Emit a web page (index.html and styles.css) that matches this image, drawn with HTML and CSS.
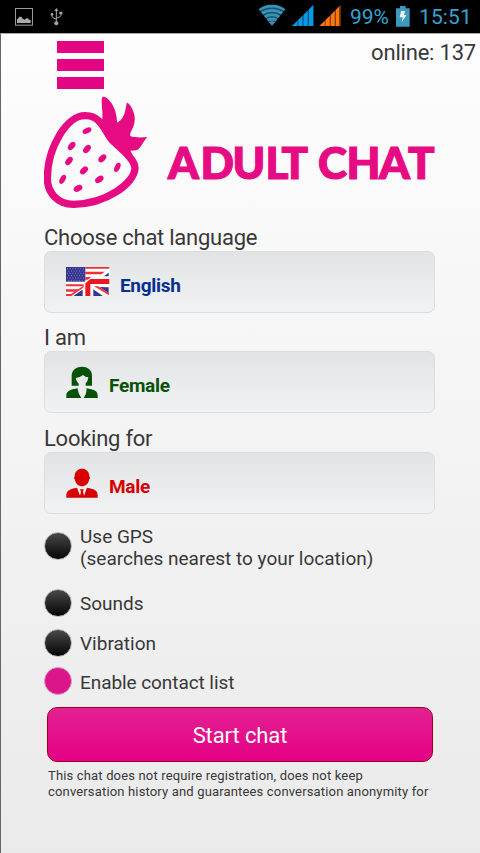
FILE: index.html
```html
<!DOCTYPE html>
<html lang="en">
<head>
<meta charset="utf-8">
<title>Adult Chat</title>
<link rel="stylesheet" href="styles.css">
</head>
<body>
<header class="status">
  <svg class="status-left" width="80" height="33" viewBox="0 0 240 99">
    <rect x="46.500" y="25.500" width="51" height="50" fill="none" stroke="#999" stroke-width="3"/>
    <path d="M51 69V58l4-3 3-5h6l4 6 6 3 5-4h5l3 4 5 1v9z" fill="#aaa"/>
    <g fill="none" stroke="#a6a6a6" stroke-width="3"><path d="M169 70V30M156 43v6q1 6 13 8M183 39v7q-1 6-14 8"/></g>
    <g fill="#a6a6a6"><circle cx="169" cy="70" r="6"/><circle cx="156" cy="43" r="4"/><path d="M178 35h9v8h-9zM169 24l6 9h-12z"/></g>
  </svg>
  <svg class="status-signal" width="90" height="33" viewBox="40 0 270 99">
    <clipPath id="fan"><path d="M97 77L57 28Q97-2 137 28z"/></clipPath>
    <path d="M97 77L57 28Q97 4 137 28z" fill="#1d5068"/>
    <g clip-path="url(#fan)" fill="none" stroke="#3793ba" stroke-width="8.500">
      <path d="M55 30Q97 6 139 30M63 42Q97 20 131 42M72 53Q97 35 122 53M80 63Q97 51 114 63"/><path d="M86 68Q97 60 108 68L97 80z" fill="#3793ba" stroke="none"/>
    </g>
    <path d="M157 78L221 15V78z" fill="#06537c"/>
    <path d="M157 78l16-15v15zM176 78V60l12-12v30zM192 78V44l12-12v46zM208 78V28l13-13v63z" fill="#0899e5"/>
    <path d="M239 78L303 15V78z" fill="#8b3d08"/>
    <path d="M239 78l16-15v15zM258 78V60l12-12v30zM274 78V44l11-11v45zM289 78V29l9-9v58z" fill="#ff7510"/>
  </svg>
  <span class="percent">99%</span>
  <svg class="battery" width="14" height="21" viewBox="0 0 42 63">
    <path d="M0 7h12V0h17v7h12v55H0z" fill="#3999bf"/>
    <path d="M15 15h12l-3 12h8L17 49l3-15h-9z" fill="#eee"/>
  </svg>
  <span class="clock">15:51</span>
</header>
<main class="page">
  <div class="topbar">
    <div class="menu"><i></i><i></i><i></i></div>
    <span class="online">online: 137</span>
  </div>
  <div class="brand">
    <svg width="104" height="113" viewBox="42 18 312 339">
      <path d="M168 77C213 77 225 125 247 151C269 174 315 205 315 235C313 279 230 342 131 343C81 343 52 306 52 265C52 174 111 73 168 77z" fill="none" stroke="#e70b83" stroke-width="22"/>
      <path d="M216 92C221 67 211 34 217 22C225 13 262 45 261 98C288 85 285 53 291 38C301 39 317 72 314 91C313 113 300 124 300 138C319 144 338 142 352 141C339 153 332 179 318 181L301 182L307 193L270 177L230 143L210 105z" fill="#e70b83"/>
      <g fill="#e70b83">
        <ellipse cx="171" cy="122" rx="14" ry="8" transform="rotate(-25 171 122)"/>
        <ellipse cx="125" cy="168" rx="14" ry="9" transform="rotate(-52 125 168)"/>
        <ellipse cx="171" cy="177" rx="14" ry="9" transform="rotate(-48 171 177)"/>
        <ellipse cx="117" cy="213" rx="14" ry="9" transform="rotate(-52 117 213)"/>
        <ellipse cx="217" cy="205" rx="14" ry="9" transform="rotate(-45 217 205)"/>
        <ellipse cx="162" cy="241" rx="14" ry="9" transform="rotate(-43 162 241)"/>
        <ellipse cx="262" cy="232" rx="15" ry="8" transform="rotate(-65 262 232)"/>
        <ellipse cx="98" cy="268" rx="15" ry="8" transform="rotate(-62 98 268)"/>
        <ellipse cx="208" cy="268" rx="14" ry="9" transform="rotate(-35 208 268)"/>
        <ellipse cx="144" cy="295" rx="14" ry="9" transform="rotate(-28 144 295)"/>
      </g>
    </svg>
    <svg class="wordmark" width="280" height="64" viewBox="0 0 280 64">
      <text x="4 36.500 68.500 101.500 117.500 141 154 182.500 215 244" y="43.500">ADULT CHAT</text>
    </svg>
  </div>
  <section class="field">
    <h2>Choose chat language</h2>
    <div class="select blue">
      <svg width="44" height="30" viewBox="0 0 132 90">
        <rect width="130" height="87" fill="#fff"/>
        <path d="M58 0h72v5H58zM58 14h60l-12 8H58zM58 30h38l-12 8H58zM0 52h58v6H0zM0 67h45l-9 7H0zM0 81h24l-9 6H0z" fill="#ef3038"/>
        <rect width="58" height="44" fill="#35358f"/>
        <path d="M3 5h53M7 12h49M3 19h53M7 26h49M3 33h53M7 40h49" stroke="#8589c3" stroke-width="3" stroke-dasharray="3 5"/>
        <path d="M128 8v20H99zM128 61v18l-27-19zM82 65l34 22H82zM50 62v25H12z" fill="#35358f"/>
        <path d="M130 4L76 45h14l40-29zM80 56l49 31h-18L76 63zM54 56L8 87h14l36-25z" fill="#fff"/>
        <path d="M55 55L6 87h10l42-29zM84 58l45 27v-7L96 58z" fill="#ef3038"/>
        <path d="M53 87V50l22-20h55v27H80v30z" fill="#fff"/>
        <path d="M58 87V49l15-13h57v15H73v36z" fill="#ed1722"/>
      </svg>
      <span>English</span>
    </div>
  </section>
  <section class="field">
    <h2>I am</h2>
    <div class="select green">
      <svg width="32" height="32" viewBox="109 122 96 96">
        <path d="M126 181V151C126 116 187 114 187 151V181H168V174Q175 168 176 156Q167 156 160 149Q151 157 138 158Q140 170 147 175V181zM110 218V211C110 196 125 192 144 189Q144 202 155 218zM162 218Q173 202 170 189C191 193 204 195 204 211V218z" fill="currentColor"/>
      </svg>
      <span>Female</span>
    </div>
  </section>
  <section class="field">
    <h2>Looking for</h2>
    <div class="select red">
      <svg width="32" height="30" viewBox="109 428 96 90">
        <path d="M135 454C134 422 180 422 179 454Q184 455 178 464C174 488 141 490 136 464Q131 456 135 454zM110 517V509C110 494 125 490 142 487L151 511L154 499L151 492H162L160 499L163 511L172 487C192 491 204 494 204 509V517z" fill="currentColor"/>
      </svg>
      <span>Male</span>
    </div>
  </section>
  <div class="options">
    <label class="option gps"><b class="dot"></b><span>Use GPS<br>(searches nearest to your location)</span></label>
    <label class="option sounds"><b class="dot"></b><span>Sounds</span></label>
    <label class="option"><b class="dot"></b><span>Vibration</span></label>
    <label class="option last"><b class="dot on"></b><span>Enable contact list</span></label>
  </div>
  <button class="start">Start chat</button>
  <p class="note">This chat does not require registration, does not keep<br>conversation history and guarantees conversation anonymity for</p>
</main>
</body>
</html>
```
FILE: styles.css
```css
* { box-sizing: border-box; }
body { margin: 0; width: 480px; height: 853px; overflow: hidden; background: #000; color: #383838; font-family: Roboto, sans-serif; }
svg { display: block; flex: none; }
.status { height: 33px; display: flex; color: #33a5d5; font-size: 21px; line-height: 35px; white-space: nowrap; }
.status-signal { margin-left: 173px; }
.percent { width: 39px; margin-left: 7px; }
.battery { margin: 6px 0 0 7px; }
.clock { margin-left: 9px; letter-spacing: .1px; }
.page { height: 820px; padding: 0 45px 0 43px; border-left: 1px solid #666; border-top: 1px solid #aaa; background: linear-gradient(#fdfdfd, #eaeaea); }
.topbar { height: 62px; display: flex; justify-content: space-between; margin-right: -41px; }
.menu { display: grid; gap: 6px; padding: 7px 0 0 12.500px; align-content: start; }
.menu i { width: 47.500px; height: 12px; background: #e40583; }
.online { font-size: 22px; line-height: 38px; letter-spacing: -.2px; }
.brand { height: 127.700px; display: flex; margin-right: -15px; }
.wordmark { margin: 39px 0 0 16px; }
.wordmark text { font: 900 44px Lato, sans-serif; fill: #e70b83; stroke: #e70b83; stroke-width: 1.200px; }
.field { height: 100.500px; }
h2 { margin: 0; height: 27px; font-size: 22px; font-weight: 400; line-height: 28px; letter-spacing: -.25px; white-space: nowrap; }
.select { height: 62.300px; display: flex; align-items: flex-start; padding: 15px 0 0 21.400px; border: 1px solid #d9dde4; border-radius: 7px; background: linear-gradient(#e2e3e5, #f1f2f4); font-size: 19px; font-weight: 700; line-height: 38px; letter-spacing: -.3px; }
.select span { margin-left: 10.600px; }
.blue { color: #03308f; }
.green { color: #075207; padding-top: 14px; }
.green span { padding-top: 1px; }
.red { color: #d80000; }
.blue span { margin-left: 9.600px; }
.options { padding-top: .500px; }
.option { height: 39px; display: flex; align-items: flex-start; gap: 8px; font-size: 19px; line-height: 29px; white-space: nowrap; }
.gps { height: 63px; line-height: 22px; }
.gps .dot { margin-top: 6px; }
.sounds { height: 40px; }
.last { height: 39.500px; letter-spacing: -.07px; }
.dot { flex: none; width: 28px; height: 28px; border: 1px solid #b6b6b6; border-radius: 50%; background: linear-gradient(#484848, #050505); }
.last .dot { margin-top: -.500px; }
.on { border-color: #dd9bc2; background: #da168a; }
.start { display: block; width: 386px; height: 55px; margin: 0 0 0 3px; padding: 0; border: 1px solid #a00020; border-radius: 10px; background: linear-gradient(#e42191, #e40085); color: #fff; font: 22px/55px Roboto, sans-serif; letter-spacing: -.1px; }
.note { margin: 6px 0 0 4px; font-size: 13px; line-height: 16px; letter-spacing: .16px; white-space: nowrap; }
```
